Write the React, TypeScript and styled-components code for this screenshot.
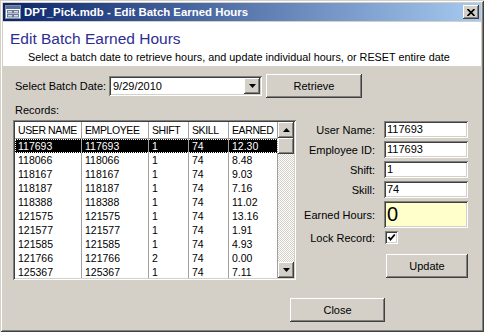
import styled, { createGlobalStyle } from "styled-components";

const GlobalStyle = createGlobalStyle`
    html, body {
        margin: 0;
        padding: 0;
    }
    body {
        font-family: "Liberation Sans", Arial, sans-serif;
        font-size: 11px;
        color: #000;
    }
`;

const raised = `
    box-shadow: inset -1px -1px #404040, inset 1px 1px #ffffff,
        inset -2px -2px #808080, inset 2px 2px #d4d0c8;
`;

const sunken = `
    box-shadow: inset 1px 1px #808080, inset -1px -1px #ffffff,
        inset 2px 2px #404040, inset -2px -2px #d4d0c8;
`;

const Window = styled.div`
    width: 484px;
    height: 332px;
    box-sizing: border-box;
    padding: 3px;
    background-color: #d4d0c8;
    box-shadow: inset 1px 1px #d4d0c8, inset -1px -1px #404040,
        inset 2px 2px #ffffff, inset -2px -2px #808080;
    display: flex;
    flex-direction: column;
`;

const TitleBar = styled.div`
    height: 18px;
    display: flex;
    align-items: center;
    padding: 0 2px;
    background: linear-gradient(to right, #0a246a, #a6caf0);
`;

const Caption = styled.span`
    flex: 1;
    margin-left: 3px;
    color: #fff;
    font-weight: bold;
    font-size: 11.4px;
    white-space: nowrap;
`;

const CloseBox = styled.div`
    width: 16px;
    height: 14px;
    display: flex;
    align-items: center;
    justify-content: center;
    background-color: #d4d0c8;
    ${raised}
`;

const Header = styled.div`
    margin-top: 1px;
    height: 44px;
    background-color: #fff;
    display: flex;
    flex-direction: column;
`;

const Heading = styled.h1`
    margin: 8px 0 0 7px;
    font-size: 15.5px;
    font-weight: normal;
    color: #2e2e92;
    line-height: 18px;
`;

const Subtitle = styled.p`
    margin: 3px 0 0 25px;
    font-size: 10.85px;
    line-height: 13px;
`;

const Body = styled.div`
    flex: 1;
    padding: 8px 0 0 10px;
    display: flex;
    flex-direction: column;
`;

const DateRow = styled.div`
    display: flex;
    align-items: center;
    height: 24px;
`;

const FieldLabel = styled.span`
    width: 94px;
    margin-left: 2px;
    white-space: nowrap;
`;

const Combo = styled.div`
    width: 153px;
    height: 20px;
    box-sizing: border-box;
    padding: 2px;
    background-color: #fff;
    display: flex;
    align-items: stretch;
    ${sunken}
`;

const ComboText = styled.span`
    flex: 1;
    padding-left: 2px;
    line-height: 16px;
`;

const ArrowButton = styled.div`
    width: 16px;
    height: 16px;
    flex: none;
    box-sizing: border-box;
    display: flex;
    align-items: center;
    justify-content: center;
    background-color: #d4d0c8;
    ${raised}
`;

const Button = styled.button<{ $w: number }>`
    width: ${(p) => p.$w}px;
    height: 24px;
    border: none;
    padding: 0;
    font-family: inherit;
    font-size: 11px;
    color: #000;
    background-color: #d4d0c8;
    ${raised}
`;

const RetrieveButton = styled(Button)`
    margin-left: 4px;
`;

const SectionLabel = styled.div`
    margin: 4px 0 0 2px;
    height: 16px;
    line-height: 16px;
`;

const MainRow = styled.div`
    margin-top: 2px;
    display: flex;
    align-items: flex-start;
`;

const ListBox = styled.div`
    width: 283px;
    height: 160px;
    box-sizing: border-box;
    padding: 2px;
    background-color: #fff;
    display: flex;
    ${sunken}
`;

const Grid = styled.div`
    width: 263px;
    display: flex;
    flex-direction: column;
    overflow: hidden;
`;

const ListRow = styled.div<{ $head?: boolean; $selected?: boolean }>`
    display: grid;
    grid-template-columns: 67px 67px 40px 40px 49px;
    height: ${(p) => (p.$head ? 17 : 14)}px;
    line-height: ${(p) => (p.$head ? 16 : 14)}px;
    font-size: 10.5px;
    background-color: ${(p) => (p.$selected ? "#000" : "#fff")};
    color: ${(p) => (p.$selected ? "#fff" : "#000")};
    border-bottom: ${(p) => (p.$head ? "1px solid #a0a0a0" : "none")};
    outline: ${(p) => (p.$selected ? "1px dotted #fff" : "none")};
    outline-offset: -1px;
`;

const Cell = styled.span<{ $tight?: boolean }>`
    padding-left: 3px;
    border-right: 1px solid #a0a0a0;
    white-space: nowrap;
    overflow: hidden;
    letter-spacing: ${(p) => (p.$tight ? "-0.4px" : "0")};
`;

const ScrollBar = styled.div`
    width: 16px;
    display: flex;
    flex-direction: column;
    background: repeating-conic-gradient(#ffffff 0 25%, #d4d0c8 0 50%) 0 0 / 2px 2px;
`;

const Thumb = styled.div`
    height: 16px;
    background-color: #d4d0c8;
    ${raised}
`;

const Track = styled.div`
    flex: 1;
`;

const Form = styled.div`
    margin: 1px 0 0 3px;
    display: grid;
    grid-template-columns: 76px 84px;
    column-gap: 9px;
    row-gap: 3px;
    align-items: center;
`;

const FormLabel = styled.span`
    text-align: right;
    white-space: nowrap;
`;

const TextBox = styled.div<{ $tall?: boolean; $bg?: string }>`
    height: ${(p) => (p.$tall ? 27 : 17)}px;
    box-sizing: border-box;
    padding: 2px 3px 0;
    background-color: ${(p) => p.$bg || "#fff"};
    font-size: ${(p) => (p.$tall ? 20 : 11)}px;
    line-height: ${(p) => (p.$tall ? 22 : 13)}px;
    ${sunken}
`;

const CheckBox = styled.div`
    width: 13px;
    height: 13px;
    margin-left: 1px;
    background-color: #fff;
    display: flex;
    ${sunken}
`;

const UpdateButton = styled(Button)`
    grid-column: 2;
    margin: 7px 0 0 2px;
`;

const Footer = styled.div`
    margin: 18px 0 0 277px;
`;

const Down = () => (
    <svg width="7" height="4" viewBox="0 0 7 4">
        <polygon points="0,0 7,0 3.5,4" fill="#000" />
    </svg>
);

const Up = () => (
    <svg width="7" height="4" viewBox="0 0 7 4">
        <polygon points="0,4 7,4 3.5,0" fill="#000" />
    </svg>
);

const headings = ["USER NAME", "EMPLOYEE", "SHIFT", "SKILL", "EARNED"];

const records = [
    ["117693", "117693", "1", "74", "12.30"],
    ["118066", "118066", "1", "74", "8.48"],
    ["118167", "118167", "1", "74", "9.03"],
    ["118187", "118187", "1", "74", "7.16"],
    ["118388", "118388", "1", "74", "11.02"],
    ["121575", "121575", "1", "74", "13.16"],
    ["121577", "121577", "1", "74", "1.91"],
    ["121585", "121585", "1", "74", "4.93"],
    ["121766", "121766", "2", "74", "0.00"],
    ["125367", "125367", "1", "74", "7.11"],
];

function App() {
    return (
        <Window>
            <GlobalStyle />
            <TitleBar>
                <svg width="16" height="14" viewBox="0 0 16 14">
                    <rect x="0.5" y="0.5" width="15" height="13" fill="#fff" stroke="#7f8fa8" />
                    <rect x="1" y="1" width="14" height="3" fill="#5a6e9a" />
                    <rect x="2.5" y="5.5" width="5" height="2.5" fill="#d8dde8" stroke="#6a7a98" />
                    <rect x="8.5" y="5.5" width="5" height="2.5" fill="#d8dde8" stroke="#6a7a98" />
                    <rect x="2.5" y="9.5" width="5" height="2.5" fill="#d8dde8" stroke="#6a7a98" />
                    <rect x="8.5" y="9.5" width="5" height="2.5" fill="#d8dde8" stroke="#6a7a98" />
                </svg>
                <Caption>DPT_Pick.mdb - Edit Batch Earned Hours</Caption>
                <CloseBox>
                    <svg width="8" height="7" viewBox="0 0 8 7">
                        <path d="M0.5 0 L7.5 7 M7.5 0 L0.5 7" stroke="#000" strokeWidth="1.7" />
                    </svg>
                </CloseBox>
            </TitleBar>
            <Header>
                <Heading>Edit Batch Earned Hours</Heading>
                <Subtitle>
                    Select a batch date to retrieve hours, and update individual hours, or RESET entire date
                </Subtitle>
            </Header>
            <Body>
                <DateRow>
                    <FieldLabel>Select Batch Date:</FieldLabel>
                    <Combo>
                        <ComboText>9/29/2010</ComboText>
                        <ArrowButton>
                            <Down />
                        </ArrowButton>
                    </Combo>
                    <RetrieveButton $w={96}>Retrieve</RetrieveButton>
                </DateRow>
                <SectionLabel>Records:</SectionLabel>
                <MainRow>
                    <ListBox>
                        <Grid>
                            <ListRow $head>
                                {headings.map((h) => (
                                    <Cell key={h} $tight>
                                        {h}
                                    </Cell>
                                ))}
                            </ListRow>
                            {records.map((r, i) => (
                                <ListRow key={r[0]} $selected={i === 0}>
                                    {r.map((v, j) => (
                                        <Cell key={j}>{v}</Cell>
                                    ))}
                                </ListRow>
                            ))}
                        </Grid>
                        <ScrollBar>
                            <ArrowButton>
                                <Up />
                            </ArrowButton>
                            <Thumb />
                            <Track />
                            <ArrowButton>
                                <Down />
                            </ArrowButton>
                        </ScrollBar>
                    </ListBox>
                    <Form>
                        <FormLabel>User Name:</FormLabel>
                        <TextBox>117693</TextBox>
                        <FormLabel>Employee ID:</FormLabel>
                        <TextBox>117693</TextBox>
                        <FormLabel>Shift:</FormLabel>
                        <TextBox>1</TextBox>
                        <FormLabel>Skill:</FormLabel>
                        <TextBox>74</TextBox>
                        <FormLabel>Earned Hours:</FormLabel>
                        <TextBox $tall $bg="#ffffcc">0</TextBox>
                        <FormLabel>Lock Record:</FormLabel>
                        <CheckBox>
                            <svg width="13" height="13" viewBox="0 0 13 13">
                                <path d="M3.5 6 L5.5 8.5 L9.8 3.5" fill="none" stroke="#000" strokeWidth="1.8" />
                            </svg>
                        </CheckBox>
                        <UpdateButton $w={82}>Update</UpdateButton>
                    </Form>
                </MainRow>
                <Footer>
                    <Button $w={95}>Close</Button>
                </Footer>
            </Body>
        </Window>
    );
}

export default App;
